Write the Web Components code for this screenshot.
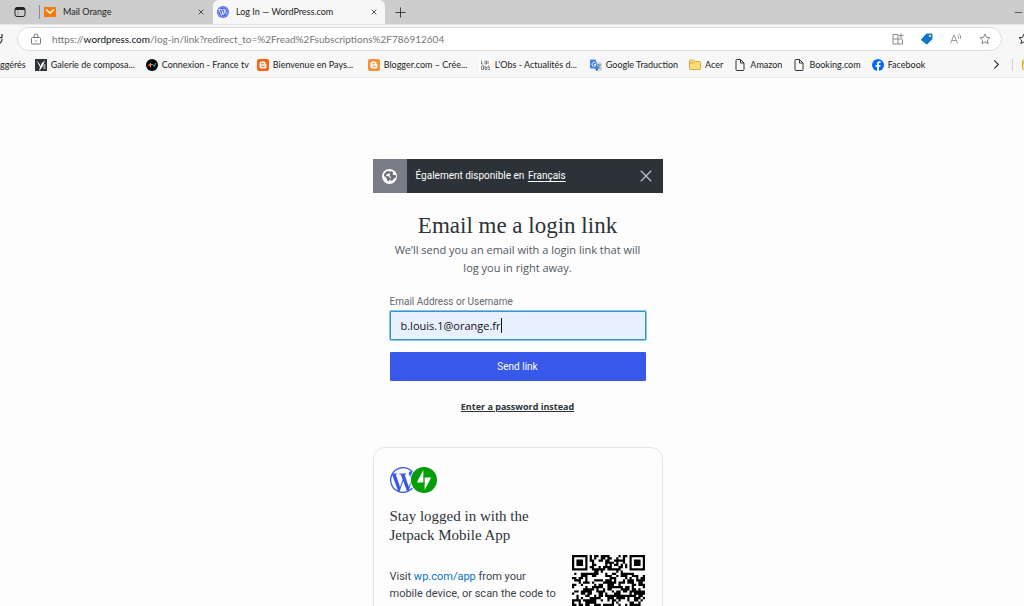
<!DOCTYPE html>
<html lang="en">
<head>
<meta charset="utf-8">
<title>Log In — WordPress.com</title>
<style>
html { overflow: hidden; }
body { margin: 0; height: 100vh; overflow: hidden; background: #fdfdfd; color: #2c3338; font-family: Roboto, "Open Sans", sans-serif; }
</style>
</head>
<body>
<browser-tabs></browser-tabs>
<browser-toolbar></browser-toolbar>
<bookmark-bar>
  <bookmark-item>ggérés</bookmark-item>
  <bookmark-item icon="gallery" wide>Galerie de composa...</bookmark-item>
  <bookmark-item icon="ftv" wide>Connexion - France tv</bookmark-item>
  <bookmark-item icon="blogger" wide>Bienvenue en Pays...</bookmark-item>
  <bookmark-item icon="blogger2" wide>Blogger.com – Crée...</bookmark-item>
  <bookmark-item icon="obs" wide>L'Obs - Actualités d...</bookmark-item>
  <bookmark-item icon="translate">Google Traduction</bookmark-item>
  <bookmark-item icon="folder">Acer</bookmark-item>
  <bookmark-item icon="page">Amazon</bookmark-item>
  <bookmark-item icon="page">Booking.com</bookmark-item>
  <bookmark-item icon="facebook">Facebook</bookmark-item>
</bookmark-bar>
<login-page>
  <locale-notice>Également disponible en <a href="#fr" style="color:inherit;text-underline-offset:2px;margin-left:1px">Français</a></locale-notice>
  <login-form></login-form>
  <app-card></app-card>
</login-page>

<script>
const WP = 'M21.469 6.825c.84 1.537 1.318 3.3 1.318 5.175 0 3.979-2.156 7.456-5.363 9.325l3.295-9.527c.615-1.54.82-2.771.82-3.864 0-.405-.026-.78-.07-1.11m-7.981.105c.647-.03 1.232-.105 1.232-.105.582-.075.514-.93-.067-.899 0 0-1.755.135-2.88.135-1.064 0-2.85-.15-2.85-.15-.585-.03-.661.855-.075.885 0 0 .54.061 1.125.09l1.68 4.605-2.37 7.08L5.354 6.9c.649-.03 1.234-.1 1.234-.1.585-.075.516-.93-.065-.896 0 0-1.746.138-2.874.138-.2 0-.438-.008-.69-.015C4.911 3.15 8.235 1.215 12 1.215c2.809 0 5.365 1.072 7.286 2.833-.046-.003-.091-.009-.141-.009-1.06 0-1.812.923-1.812 1.914 0 .89.513 1.643 1.06 2.531.411.72.89 1.643.89 2.977 0 .915-.354 1.994-.821 3.479l-1.075 3.585-3.9-11.61.001.014zM12 22.784c-1.059 0-2.081-.153-3.048-.437l3.237-9.406 3.315 9.087c.024.053.05.101.078.149-1.12.393-2.325.609-3.582.609M1.211 12c0-1.564.336-3.05.935-4.39L7.29 21.709C3.694 19.96 1.212 16.271 1.211 12M12 0C5.385 0 0 5.385 0 12s5.385 12 12 12 12-5.385 12-12S18.615 0 12 0';
const STAR = 'M12 2l3 6.500 7 .8-5.200 4.900 1.400 7-6.200-3.500-6.200 3.500 1.400-7L2 9.300l7-.8z';
const bloggerMark = c => `<rect width="24" height="24" rx="4" fill="${c}"/><path d="M9 5h4a4 4 0 0 1 4 4c0 2 2 1 2 3v3a4 4 0 0 1-4 4H9a4 4 0 0 1-4-4V9a4 4 0 0 1 4-4z" fill="#fff"/><path d="M9 9.500h4M9 14.500h6" stroke="${c}" stroke-width="2" stroke-linecap="round"/>`;
const line = (d, c, w = 2) => `<path d="${d}" fill="none" stroke="${c}" stroke-width="${w}" stroke-linejoin="round"/>`;
const ICONS = {
  window: `<rect x="2" y="3" width="20" height="18" rx="4" fill="none" stroke="#222" stroke-width="2"/><path d="M2 8V6a3 3 0 0 1 3-3h14a3 3 0 0 1 3 3v2z" fill="#222"/>` + line('M8 7v14', '#666', 1),
  mail: '<rect y="2" width="24" height="20" fill="#f27a0c"/><path d="M4 7l8 7 8-7" fill="none" stroke="#fff" stroke-width="3"/>',
  wp: `<circle cx="12" cy="12" r="12" fill="#4b63e6"/><circle cx="12" cy="12" r="10" fill="none" stroke="#c9d1fb" stroke-width="1"/><path d="M4 7h5l4 11 3-8-2-3M4 7l5 12 3-8M11 7h5l3 9" fill="none" stroke="#fff" stroke-width="1.500"/>`,
  close: line('M5 5l14 14M19 5L5 19', '#333', 2.5),
  plus: line('M12 1v22M1 12h22', '#333', 2),
  min: line('M2 12h20', '#333', 2),
  reload: line('M22 2v7h-6M22 12a10 10 0 0 1-7 10', '#333', 2.5),
  lock: '<rect x="3" y="9" width="18" height="13" rx="2" fill="none" stroke="#777" stroke-width="2"/><path d="M8 9V6a4 4 0 0 1 8 0v3" fill="none" stroke="#777" stroke-width="2"/><circle cx="12" cy="16" r="1.500" fill="#777"/>',
  apps: line('M12 3H2v19h19v-9M2 12h19M12 3v19M18 1v9M14 5h9', '#888', 2),
  tag: '<path d="M12 1h9a2 2 0 0 1 2 2v8a3 3 0 0 1-1 2l-9 9a2 2 0 0 1-3 0l-9-7a2 2 0 0 1 0-3l9-10z" fill="#0b78d0"/><circle cx="18" cy="6" r="2.500" fill="#ffc83d"/>',
  read: line('M1 21L8 4l7 17M3 15h10M15 5q3 2 2 6M17 1q6 4 4 11', '#888', 1.7),
  star: line(STAR, '#777', 1.8),
  stars: line(STAR, '#333', 2),
  gallery: '<rect width="24" height="24" fill="#2c3238"/><path d="M3 3l7 8v4l4-7 6-5-4 10-5 8-3 3 2-8z" fill="#fff"/><path d="M17 10h4v10h-5z" fill="#999"/>',
  ftv: '<circle cx="12" cy="12" r="12" fill="#050505"/><path d="M3 13l5-4v6z" fill="#e64a3b"/><path d="M9 8v8M7 11h5" stroke="#ff7b2d" stroke-width="2"/><path d="M13 10l3 5 4-7" fill="none" stroke="#42b8aa" stroke-width="2"/>',
  blogger: bloggerMark('#ff6510'),
  blogger2: bloggerMark('#f69035'),
  obs: '<rect width="24" height="24" fill="#fff"/><path d="M5 3v7h4M12 4h3v6h-3zM18 3v7M5 14h4v7H5zM12 13v8h4v-4h-4M21 14h-3v3h3v4h-3" fill="none" stroke="#777" stroke-width="1.800"/>',
  translate: '<path d="M9 6h12a3 3 0 0 1 3 3v13a2 2 0 0 1-2 2h-8z" fill="#d5d7db"/><path d="M13 12h9M17 10v2M20 12l-5 8M15 14l6 6" stroke="#647688" stroke-width="1.500"/><path d="M2 1h9l6 18H2a2 2 0 0 1-2-2V3a2 2 0 0 1 2-2z" fill="#3d82f0"/><path d="M11 8a4 4 0 1 0 1 3H8" fill="none" stroke="#fff" stroke-width="1.800"/><path d="M10 19h7l-4 5z" fill="#174ea6"/>',
  folder: '<path d="M1 4a2 2 0 0 1 2-2h6l3 3h9a2 2 0 0 1 2 2v12a2 2 0 0 1-2 2H3a2 2 0 0 1-2-2z" fill="#ffdd78" stroke="#c59517" stroke-width="1.500"/><path d="M1 8h8l3-3" fill="none" stroke="#c59517" stroke-width="1.500"/>',
  page: line('M4 3a2 2 0 0 1 2-2h7l7 7v13a2 2 0 0 1-2 2H6a2 2 0 0 1-2-2zM13 1v7h7', '#333', 2),
  facebook: '<circle cx="12" cy="12" r="12" fill="#0866ff"/><path d="M16.671 15.469 17.203 12h-3.328V9.750c0-.949.465-1.875 1.956-1.875h1.513V4.922s-1.374-.234-2.686-.234c-2.741 0-4.533 1.661-4.533 4.668V12H7.078v3.469h3.047v8.385a12.130 12.130 0 0 0 3.750 0v-8.385z" fill="#fff"/>',
  chevron: line('M7 3l9 9-9 9', '#333', 2.5),
  globe: '<circle cx="12" cy="12" r="12" fill="#fff"/><path d="M9 3l4 1-1 3-4 1-2 3 5 1 3 3-2 2-1 3-3-2-1-4-4-3c0-4 3-7 6-8zM15 3l3 2-1 3 2 2 3-1v5l-3 1-2 3-3 1-1-3 2-3-3-2 1-3-1-2z" fill="#6b6e77"/>',
  cross: line('M3 3l18 18M21 3L3 21', '#c3c4c7', 2),
  wplogo: `<path d="${WP}" fill="#3858e9"/>`,
  jetpack: '<circle cx="12" cy="12" r="12" fill="#069e08"/><path d="M11.372 14.265H5.416l5.956-11.586zM12.627 21.322V9.735h5.957z" fill="#fff"/>'
};

class Base extends HTMLElement {
  constructor() {
    super();
    this.attachShadow({ mode: 'open' });
  }
  connectedCallback() {
    this.shadowRoot.innerHTML = `<style>*{box-sizing:border-box}button{font:inherit;border:0;background:none;padding:0;margin:0;display:grid;place-items:center}${this.css()}</style>${this.html()}`;
  }
}

customElements.define('ui-icon', class extends Base {
  css() { return ':host{display:block;flex:none;width:var(--size,12px);height:var(--size,12px)}svg{display:block;width:100%;height:100%}'; }
  html() { return `<svg viewBox="0 0 24 24" aria-hidden="true">${ICONS[this.getAttribute('name')] || ''}</svg>`; }
});

customElements.define('browser-tabs', class extends Base {
  css() { return `
    :host{display:flex;align-items:stretch;height:24px;background:#cdcdcd;color:#222;font:9px/24px Lato,"Open Sans",sans-serif}
    .menu{width:40px;border-right:1px solid #8d8d8d;margin:5px 0}
    .tab{display:flex;align-items:center;gap:7px;width:172px;padding:0 7px 0 4px}
    .tab span{flex:1}
    .active{background:#f7f7f7;border-radius:6px 6px 0 0;margin-left:1px}
    .close{--size:8px}
    .new{width:31px;--size:11px}
    .min{margin-left:auto;width:12px;--size:9px}`; }
  html() { return `
    <button class="menu" aria-label="Tab actions"><ui-icon name="window"></ui-icon></button>
    <div class="tab"><ui-icon name="mail"></ui-icon><span>Mail Orange</span><button class="close" aria-label="Close tab"><ui-icon name="close"></ui-icon></button></div>
    <div class="tab active"><ui-icon name="wp"></ui-icon><span>Log In — WordPress.com</span><button class="close" aria-label="Close tab"><ui-icon name="close"></ui-icon></button></div>
    <button class="new" aria-label="New tab"><ui-icon name="plus"></ui-icon></button>
    <button class="min" aria-label="Minimize"><ui-icon name="min"></ui-icon></button>`; }
});

customElements.define('browser-toolbar', class extends Base {
  css() { return `
    :host{display:flex;align-items:center;height:28px;overflow:hidden;background:#f7f7f7;border-top:1px solid #e6e6e6;box-sizing:border-box}
    .reload{flex:none;width:17px;margin-left:-9px;margin-right:9px;justify-content:start}
    .pill{flex:1;display:flex;align-items:center;height:24px;padding:0 10px 0 12px;border:1px solid #dedede;border-radius:12px;background:#fff;font:10px/22px Lato,"Open Sans",sans-serif;color:#767676}
    .url{flex:1;margin-left:10px}
    b{font-weight:400;color:#111}
    .tools{display:flex;gap:17px}
    .fav{flex:none;width:30px;margin-right:-8px;padding-left:14px}`; }
  html() { return `
    <button class="reload" aria-label="Refresh"><ui-icon name="reload"></ui-icon></button>
    <div class="pill"><ui-icon name="lock"></ui-icon><span class="url">https://<b>wordpress.com</b>/log-in/link?redirect_to=%2Fread%2Fsubscriptions%2F786912604</span>
      <div class="tools">${['apps', 'tag', 'read', 'star'].map(n => `<button aria-label="${n}"><ui-icon name="${n}"></ui-icon></button>`).join('')}</div></div>
    <button class="fav" aria-label="Favorites"><ui-icon name="stars"></ui-icon></button>`; }
});

customElements.define('bookmark-bar', class extends Base {
  css() { return `
    :host{display:flex;align-items:center;height:26px;box-sizing:border-box;background:#f7f7f7;border-bottom:1px solid #ebebeb;overflow:hidden;font:9px/24px Lato,"Open Sans",sans-serif;color:#222}
    .more{margin-left:auto;width:32px;--size:11px}
    .sep{flex:none;width:1px;height:12px;background:#d0d0d0;margin-right:9px}
    .end{width:2px;overflow:hidden}`; }
  html() { return `<slot></slot><button class="more" aria-label="More favorites"><ui-icon name="chevron"></ui-icon></button><span class="sep"></span><div class="end"><ui-icon name="folder"></ui-icon></div>`; }
});

customElements.define('bookmark-item', class extends Base {
  css() { return `
    :host{display:block;flex:none;padding-right:11px}
    :host(:not([icon])){padding-right:9px}
    :host([wide]){width:111px;padding-right:0}
    a{display:flex;align-items:center;gap:4px;color:inherit;text-decoration:none;white-space:nowrap}`; }
  html() {
    const icon = this.getAttribute('icon');
    return `<a href="#bookmark">${icon ? `<ui-icon name="${icon}"></ui-icon>` : ''}<slot></slot></a>`;
  }
});

customElements.define('login-page', class extends Base {
  css() { return `
    :host{display:block;padding:81px 0 0 11px}
    main{width:290px;max-width:100%;margin:0 auto}`; }
  html() { return '<main><slot></slot></main>'; }
});

customElements.define('locale-notice', class extends Base {
  css() { return `
    :host{display:flex;align-items:stretch;height:34px;background:#2c3338;color:#fff;font-size:10px;line-height:34px}
    .mark{display:grid;place-items:center;width:34px;background:#787c86;--size:15px}
    .text{flex:1;padding-left:9px}
    .close{width:34px;--size:14px}`; }
  html() { return `<div class="mark"><ui-icon name="globe"></ui-icon></div><div class="text"><slot></slot></div><button class="close" aria-label="Dismiss"><ui-icon name="cross"></ui-icon></button>`; }
});

customElements.define('login-form', class extends Base {
  css() { return `
    :host{display:block;padding:18px 17px 0;text-align:center}
    h1{margin:0;font:400 23px/30px "Liberation Serif",serif}
    p{margin:0;font:11px/18px "Open Sans",sans-serif;color:#50575e}
    form{display:flex;flex-direction:column;margin-top:18px}
    label{font-size:10px;line-height:14px;color:#646970;text-align:left;margin-bottom:2px}
    input{width:100%;height:29px;border:1px solid #3593cf;border-radius:1px;outline:0;box-shadow:0 0 0 1px #8cc5ea;padding:0 10px;color:#111;font:11px "Open Sans",sans-serif;background:linear-gradient(#111,#111) 110px 50%/1px 15px no-repeat #e8f0fe}
    .send{height:29px;margin-top:12px;border-radius:1px;background:#3858e9;color:#fff;font-size:10px}
    .alt{display:inline-block;margin-top:18px;font:700 9px/16px "Open Sans",sans-serif;color:#2c3338;text-underline-offset:1px}`; }
  html() { return `
    <h1>Email me a login link</h1>
    <p>We’ll send you an email with a login link that will log you in right away.</p>
    <form><label for="user">Email Address or Username</label><input id="user" type="text" value="b.louis.1@orange.fr">
    <button class="send" type="button">Send link</button></form>
    <a class="alt" href="#password">Enter a password instead</a>`; }
});

/* Module grid for the QR image: 33 x 33, with finder squares in three corners. */
function qrPath() {
  const n = 33;
  let seed = 7, d = '';
  const rnd = () => (seed = (seed * 1103515245 + 12345) % 2147483648) / 2147483648;
  for (let y = 0; y < n; y++) for (let x = 0; x < n; x++) {
    let on = rnd() < 0.52;
    const fx = x < 8 ? x : x > n - 9 ? n - 1 - x : -1;
    const fy = y < 8 ? y : y > n - 9 ? n - 1 - y : -1;
    if (fx >= 0 && fy >= 0 && !(x > 24 && y > 24)) {
      const r = Math.max(Math.abs(fx - 3), Math.abs(fy - 3));
      on = r !== 2 && r !== 4;
    }
    if (on) d += `M${x} ${y}h1v1h-1z`;
  }
  return d;
}

customElements.define('app-card', class extends Base {
  css() { return `
    :host{display:block;margin-top:32px;padding:19px 17px 19px 16px;border:1px solid #e4e4e6;border-radius:12px}
    .logos{display:flex;--size:26px}
    .logos ui-icon+ui-icon{margin-left:-5px;border-radius:50%;box-shadow:0 0 0 1px #fdfdfd}
    h2{margin:14px 0 0;font:400 15px/19px "Liberation Serif",serif}
    .row{display:flex;justify-content:space-between;margin-top:10px}
    p{margin:13px 0 0;font-size:11px;line-height:17px;color:#3c434a}
    a{color:#0675c4;text-decoration:none}
    .qr{flex:none;width:73px;height:73px}`; }
  html() { return `
    <div class="logos"><ui-icon name="wplogo"></ui-icon><ui-icon name="jetpack"></ui-icon></div>
    <h2>Stay logged in with the<br>Jetpack Mobile App</h2>
    <div class="row"><p>Visit <a href="#app">wp.com/app</a> from your<br>mobile device, or scan the code to</p>
    <svg class="qr" viewBox="0 0 33 33" role="img" aria-label="QR code"><path d="${qrPath()}" fill="#000"/></svg></div>`; }
});
</script>
</body>
</html>
